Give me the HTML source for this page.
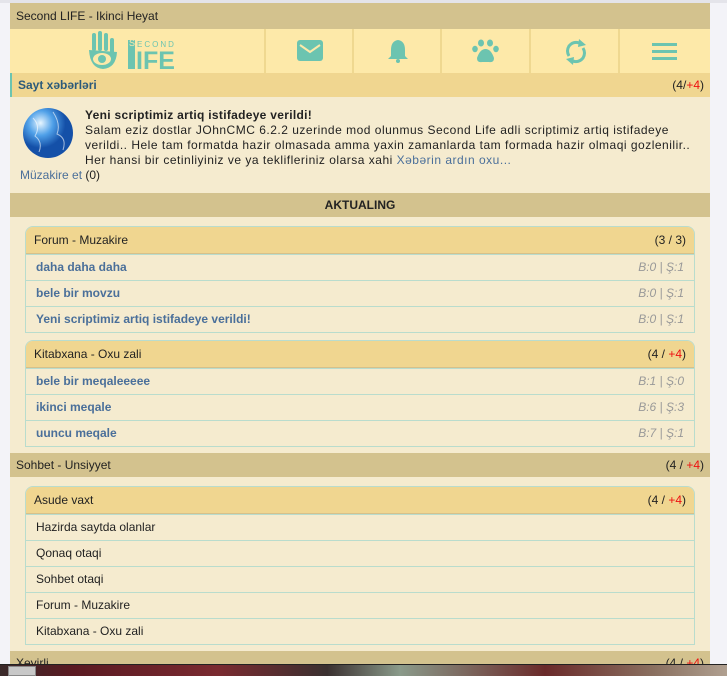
<!DOCTYPE html>
<html><head><meta charset="utf-8"><style>
*{margin:0;padding:0;box-sizing:border-box}
body{width:727px;height:676px;overflow:hidden;background:#f3f3f8;font-family:"Liberation Sans",sans-serif;font-size:12px;color:#222;position:relative}
.a{position:absolute}
.bar{position:absolute;left:10px;width:700px;height:24px;background:#d3c28e;line-height:24px;padding:0 6px;font-size:12px}
.r{float:right}.red{color:#e11}
.box{position:absolute;left:25px;width:670px;border:1px solid #b9dccd;background:#f5ebcf;border-radius:8px 8px 0 0}
.bh{height:27px;line-height:27px;background:#f0d690;border-radius:7px 7px 0 0;padding:0 8px;border-bottom:1px solid #d6c08a}
.row{height:26px;line-height:25px;padding:0 10px;border-top:1px solid #b9dccd}
.row:first-of-type{border-top:none}
.lk{color:#4a6f9a;font-weight:bold}
.m{color:#999;font-style:italic;float:right;font-size:12px}
.nav{position:absolute;top:29px;height:44px;background:#fde9a9;border-right:2px solid #efd890}
</style></head><body>
<div class="a" style="left:0;top:0;width:727px;height:3px;background:#e4e4ea"></div>
<div class="bar" style="top:3px;height:26px;line-height:26px">Second LIFE - Ikinci Heyat</div>
<div class="nav" style="left:10px;width:256px"></div>
<div class="nav" style="left:266px;width:88px"></div>
<div class="nav" style="left:354px;width:88px"></div>
<div class="nav" style="left:442px;width:89px"></div>
<div class="nav" style="left:531px;width:89px"></div>
<div class="nav" style="left:620px;width:90px;border-right:none"></div>
<svg class="a" style="left:86px;top:30px" width="105" height="42" viewBox="0 0 105 42">
<g fill="#6cc4b0"><rect x="6" y="3" width="4" height="18" rx="2"/><rect x="12" y="1" width="4" height="20" rx="2"/><rect x="18" y="3" width="4" height="18" rx="2"/><rect x="24" y="8" width="4" height="16" rx="2"/>
<path d="M3 20 Q4 38 17 39 Q30 38 31 22 L3 20Z"/></g>
<ellipse cx="16" cy="29" rx="9" ry="6" fill="#fde9a9"/><circle cx="16" cy="29" r="4" fill="#6cc4b0"/>
<rect x="42" y="10" width="7" height="29" fill="#6cc4b0"/>
<text x="51" y="17" font-family="Liberation Sans" font-size="8" fill="#6cc4b0" letter-spacing="2">ECOND</text>
<text x="43" y="16" font-family="Liberation Sans" font-size="9" fill="#fde9a9">S</text>
<text x="50" y="39" font-family="Liberation Sans" font-weight="bold" font-size="25" fill="#6cc4b0">IFE</text>
</svg>
<svg class="a" style="left:297px;top:40px" width="26" height="22"><rect x="0" y="0" width="26" height="21" rx="3" fill="#6cc4b0"/><path d="M3 5 L13 12 L23 5" stroke="#fde9a9" stroke-width="2" fill="none"/></svg>
<svg class="a" style="left:387px;top:38px" width="22" height="26"><path d="M11 2 Q4 3 4 12 L4 18 L1 21 L21 21 L18 18 L18 12 Q18 3 11 2Z" fill="#6cc4b0"/><circle cx="11" cy="23" r="2" fill="#6cc4b0"/></svg>
<svg class="a" style="left:472px;top:38px" width="28" height="26"><g fill="#6cc4b0"><ellipse cx="9" cy="5" rx="3" ry="3.5"/><ellipse cx="18" cy="5" rx="3" ry="3.5"/><ellipse cx="3" cy="11" rx="2.8" ry="3.2"/><ellipse cx="24" cy="11" rx="2.8" ry="3.2"/><path d="M13.5 11 Q8 11 5 20 Q5 25 10 24 L17 24 Q22 25 22 20 Q19 11 13.5 11Z"/></g></svg>
<svg class="a" style="left:564px;top:38px" width="24" height="28"><g stroke="#6cc4b0" stroke-width="3" fill="none"><path d="M18 6 Q10 2 5 8 Q2 13 5 18"/><path d="M6 22 Q14 26 19 20 Q22 15 19 10"/></g><path d="M15 1 L22 7 L14 9Z" fill="#6cc4b0"/><path d="M9 27 L2 21 L10 19Z" fill="#6cc4b0"/></svg>
<svg class="a" style="left:652px;top:43px" width="25" height="18"><g fill="#6cc4b0"><rect y="0" width="25" height="3"/><rect y="7" width="25" height="3"/><rect y="14" width="25" height="3"/></g></svg>
<div class="bar" style="top:73px;background:#f0d690;border-left:2px solid #6cc4b0;color:#2c5a7a;font-weight:bold">Sayt xəbərləri<span class="r" style="font-weight:normal;color:#222">(4/<span class="red">+4</span>)</span></div>
<div class="a" style="left:10px;top:97px;width:700px;height:93px;background:#f5ebcf"></div>
<svg class="a" style="left:23px;top:106px" width="52" height="56"><defs><radialGradient id="g" cx="35%" cy="30%"><stop offset="0" stop-color="#e8f6ff"/><stop offset=".5" stop-color="#4fa0e8"/><stop offset="1" stop-color="#1450a8"/></radialGradient></defs><circle cx="25" cy="27" r="25" fill="url(#g)"/><path d="M10 12 Q18 20 12 30 Q20 36 16 46 M30 6 Q38 18 34 28 Q44 32 40 44" stroke="#fff" stroke-opacity=".6" fill="none"/></svg>
<div class="a" style="left:85px;top:108px;width:625px;line-height:15px;font-size:12px;letter-spacing:0.5px;white-space:nowrap"><b style="letter-spacing:0.3px">Yeni scriptimiz artiq istifadeye verildi!</b><br>Salam eziz dostlar JOhnCMC 6.2.2 uzerinde mod olunmus Second Life adli scriptimiz artiq istifadeye<br>verildi.. Hele tam formatda hazir olmasada amma yaxin zamanlarda tam formada hazir olmaqi gozlenilir..<br>Her hansi bir cetinliyiniz ve ya teklifleriniz olarsa xahi <span style="color:#4a6f9a">Xəbərin ardın oxu...</span></div>
<div class="a" style="left:20px;top:168px"><span style="color:#4a6f9a">Müzakire et</span> (0)</div>
<div class="a" style="left:10px;top:190px;width:700px;height:474px;background:#f5ebcf"></div>
<div class="bar" style="top:193px;text-align:center;font-weight:bold">AKTUALING</div>
<div class="box" style="top:226px"><div class="bh">Forum - Muzakire<span class="r">(3 / 3)</span></div>
<div class="row"><span class="lk">daha daha daha</span><span class="m">B:0 | Ş:1</span></div>
<div class="row"><span class="lk">bele bir movzu</span><span class="m">B:0 | Ş:1</span></div>
<div class="row"><span class="lk">Yeni scriptimiz artiq istifadeye verildi!</span><span class="m">B:0 | Ş:1</span></div></div>
<div class="box" style="top:340px"><div class="bh">Kitabxana - Oxu zali<span class="r">(4 / <span class="red">+4</span>)</span></div>
<div class="row"><span class="lk">bele bir meqaleeeee</span><span class="m">B:1 | Ş:0</span></div>
<div class="row"><span class="lk">ikinci meqale</span><span class="m">B:6 | Ş:3</span></div>
<div class="row"><span class="lk">uuncu meqale</span><span class="m">B:7 | Ş:1</span></div></div>
<div class="bar" style="top:453px">Sohbet - Unsiyyet<span class="r">(4 / <span class="red">+4</span>)</span></div>
<div class="box" style="top:486px"><div class="bh">Asude vaxt<span class="r">(4 / <span class="red">+4</span>)</span></div>
<div class="row">Hazirda saytda olanlar</div><div class="row">Qonaq otaqi</div><div class="row">Sohbet otaqi</div><div class="row">Forum - Muzakire</div><div class="row">Kitabxana - Oxu zali</div></div>
<div class="bar" style="top:651px">Xeyirli<span class="r">(4 / <span class="red">+4</span>)</span></div>
<div class="a" style="left:0;top:664px;width:727px;height:12px;background:linear-gradient(90deg,#3a2a2a 0,#5a1a22 10%,#7a2a30 30%,#3a3030 45%,#8a9a8a 55%,#6a2a2a 75%,#8a7060 90%,#b0a090 100%);border-top:1px solid #222"></div>
<div class="a" style="left:8px;top:666px;width:28px;height:10px;background:#c8c8c8;border:1px solid #888"></div>
</body></html>
